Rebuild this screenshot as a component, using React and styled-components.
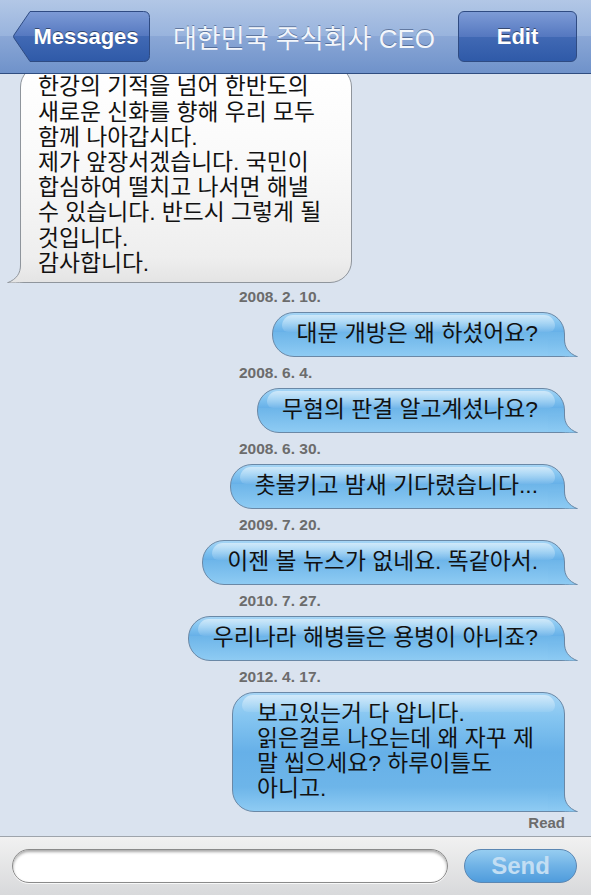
import React from 'react'
import styled, { createGlobalStyle } from 'styled-components'

const GlobalStyle = createGlobalStyle`
  html, body {
    margin: 0;
    padding: 0;
    background: #dae3ef;
  }
  * { box-sizing: border-box; }
`

const KO = `"Liberation Sans", "Noto Sans CJK KR", sans-serif`

const messages = [
    { date: '2008. 2. 10.', lines: ['대문 개방은 왜 하셨어요?'] },
    { date: '2008. 6. 4.', lines: ['무혐의 판결 알고계셨나요?'] },
    { date: '2008. 6. 30.', lines: ['촛불키고 밤새 기다렸습니다...'] },
    { date: '2009. 7. 20.', lines: ['이젠 볼 뉴스가 없네요. 똑같아서.'] },
    { date: '2010. 7. 27.', lines: ['우리나라 해병들은 용병이 아니죠?'] },
    {
        date: '2012. 4. 17.',
        lines: ['보고있는거 다 압니다.', '읽은걸로 나오는데 왜 자꾸 제', '말 씹으세요? 하루이틀도', '아니고.'],
        padRight: 30,
    },
]

const received = [
    '한강의 기적을 넘어 한반도의',
    '새로운 신화를 향해 우리 모두',
    '함께 나아갑시다.',
    '제가 앞장서겠습니다. 국민이',
    '합심하여 떨치고 나서면 해낼',
    '수 있습니다. 반드시 그렇게 될',
    '것입니다.',
    '감사합니다.',
]

const Tail = ({ tone }) => {
    const id = tone === 'blue' ? 'tail-blue' : 'tail-gray'
    const stops = tone === 'blue' ? ['#8ecbf3', '#6db5e9'] : ['#e4e4e4', '#eeeeee']
    const stroke = tone === 'blue' ? '#6a88a6' : '#8f959c'
    return (
        <TailSvg $tone={tone} width="30" height="28" viewBox="0 0 30 28">
            <defs>
                <linearGradient id={id} gradientUnits="userSpaceOnUse" x1="0" y1="28" x2="0" y2="4">
                    <stop offset="0" stopColor={stops[0]} />
                    <stop offset="1" stopColor={stops[1]} />
                </linearGradient>
            </defs>
            <path d="M0,10 L16.5,10 C16.5,18 20,24 29.5,27.8 C24,28.3 19,27.8 13,28 L0,28 Z" fill={`url(#${id})`} />
            <path d="M16.5,10 C16.5,18 20,24 29.5,27.8 C24,28.3 19,27.8 13,27.5 L0,27.5" fill="none" stroke={stroke} strokeWidth="1" />
        </TailSvg>
    )
}

const Lines = ({ lines }) => (
    <Text>
        {lines.map((l, i) => (
            <React.Fragment key={i}>
                {l}
                {i < lines.length - 1 && <br />}
            </React.Fragment>
        ))}
    </Text>
)

const App = () => {
    return (
        <>
            <GlobalStyle />
            <Screen>
                <NavBar>
                    <BackButton>
                        <svg width="138" height="51" viewBox="0 0 138 51">
                            <defs>
                                <linearGradient id="nav-btn" x1="0" y1="0" x2="0" y2="1">
                                    <stop offset="0" stopColor="#7d9bd6" />
                                    <stop offset="0.5" stopColor="#5578c0" />
                                    <stop offset="0.5" stopColor="#4169b4" />
                                    <stop offset="1" stopColor="#2f5aa8" />
                                </linearGradient>
                            </defs>
                            <path
                                d="M18,0.5 L131.5,0.5 Q137.5,0.5 137.5,6.5 L137.5,44.5 Q137.5,50.5 131.5,50.5 L18,50.5 L2,27 Q1,25.5 2,24 Z"
                                fill="url(#nav-btn)"
                                stroke="#2f4b82"
                                strokeWidth="1"
                            />
                        </svg>
                        <span>Messages</span>
                    </BackButton>
                    <Title>대한민국 주식회사 CEO</Title>
                    <EditButton>Edit</EditButton>
                </NavBar>

                <Chat>
                    <Bubble $tone="gray">
                        <Lines lines={received} />
                        <Tail tone="gray" />
                    </Bubble>

                    {messages.map((m) => (
                        <React.Fragment key={m.date}>
                            <DateStamp>{m.date}</DateStamp>
                            <Bubble $tone="blue" $padRight={m.padRight}>
                                <Lines lines={m.lines} />
                                <Tail tone="blue" />
                            </Bubble>
                        </React.Fragment>
                    ))}

                    <ReadMark>Read</ReadMark>
                </Chat>

                <InputBar>
                    <Field />
                    <SendButton>Send</SendButton>
                </InputBar>
            </Screen>
        </>
    )
}

const Screen = styled.div`
  width: 591px;
  height: 895px;
  display: flex;
  flex-direction: column;
  overflow: hidden;
  background: #dae3ef;
`

const NavBar = styled.header`
  position: relative;
  z-index: 2;
  height: 74px;
  flex-shrink: 0;
  display: flex;
  align-items: flex-start;
  padding: 11px 14px 0 12px;
  background: linear-gradient(#b2c7e6 0%, #98b3dd 50%, #8aa7d6 50%, #6f92ca 100%);
  border-bottom: 1px solid #2f4d80;
`

const BackButton = styled.button`
  position: relative;
  width: 138px;
  height: 51px;
  padding: 0 0 0 10px;
  border: none;
  background: none;
  display: flex;
  align-items: center;
  justify-content: center;
  font-family: "Liberation Sans", Arial, sans-serif;
  font-weight: bold;
  font-size: 22px;
  color: #fff;
  text-shadow: 0 -1px 0 rgba(0, 0, 0, 0.45);

  svg {
    position: absolute;
    inset: 0;
  }
  span {
    position: relative;
  }
`

const Title = styled.h1`
  flex: 1;
  margin: 0;
  height: 51px;
  display: flex;
  align-items: center;
  justify-content: center;
  font-family: ${KO};
  font-weight: normal;
  font-size: 26px;
  color: #f3f6fb;
  text-shadow: 0 -1px 0 rgba(40, 60, 100, 0.5);
`

const EditButton = styled.button`
  width: 119px;
  height: 51px;
  border: 1px solid #2f4b82;
  border-radius: 6px;
  background: linear-gradient(#7d9bd6 0%, #5578c0 50%, #4169b4 50%, #2f5aa8 100%);
  font-family: "Liberation Sans", Arial, sans-serif;
  font-weight: bold;
  font-size: 22px;
  color: #fff;
  text-shadow: 0 -1px 0 rgba(0, 0, 0, 0.45);
`

const Chat = styled.main`
  flex: 1;
  min-height: 0;
  overflow: hidden;
  display: flex;
  flex-direction: column;
  justify-content: flex-end;
  padding: 0 26px 5px 20px;
`

const Bubble = styled.div`
  position: relative;
  flex-shrink: 0;
  align-self: ${(p) => (p.$tone === 'blue' ? 'flex-end' : 'flex-start')};
  padding: ${(p) =>
        p.$tone === 'blue' ? `8px ${p.$padRight || 26}px 10px 24px` : '8px 30px 6px 17px'};
  margin-bottom: ${(p) => (p.$tone === 'blue' ? '0' : '-2px')};
  border: 1px solid ${(p) => (p.$tone === 'blue' ? '#6a88a6' : '#8f959c')};
  border-radius: 22px;
  ${(p) => (p.$tone === 'blue' ? 'border-bottom-right-radius: 16px;' : 'border-bottom-left-radius: 16px;')}
  background: ${(p) =>
        p.$tone === 'blue'
            ? 'linear-gradient(to top, #8ecbf3 0px, #6db5e9 24px, #66b0e8 50%, #86c6f1 80%, #a6d5f5 100%)'
            : 'linear-gradient(to top, #e4e4e4 0px, #eeeeee 24px, #fafafa 60%, #ffffff 100%)'};
  font-family: ${KO};
  font-size: 22.8px;
  line-height: ${(p) => (p.$tone === 'blue' ? '25px' : '25.2px')};
  color: #111;
  white-space: nowrap;

  ${(p) =>
        p.$tone === 'blue' &&
        `
    &::before {
      content: '';
      position: absolute;
      top: 2px;
      left: 9px;
      right: 9px;
      height: 17px;
      border-radius: 14px 14px 8px 8px;
      background: linear-gradient(rgba(255, 255, 255, 0.5), rgba(255, 255, 255, 0.08));
    }
  `}
`

const Text = styled.span`
  position: relative;
  z-index: 1;
`

const TailSvg = styled.svg`
  position: absolute;
  bottom: -1px;
  ${(p) => (p.$tone === 'blue' ? 'right: -14px;' : 'left: -14px; transform: scaleX(-1);')}
`

const DateStamp = styled.div`
  flex-shrink: 0;
  margin: 7px 0 7px 219px;
  font-family: "Liberation Sans", Arial, sans-serif;
  font-weight: bold;
  font-size: 15.5px;
  line-height: 17px;
  color: #6c6c6c;
`

const ReadMark = styled.div`
  flex-shrink: 0;
  margin-top: 2px;
  text-align: right;
  font-family: "Liberation Sans", Arial, sans-serif;
  font-weight: bold;
  font-size: 15px;
  line-height: 17px;
  color: #6c6c6c;
`

const InputBar = styled.footer`
  height: 59px;
  flex-shrink: 0;
  display: flex;
  align-items: center;
  gap: 16px;
  padding: 0 14px 1px 12px;
  border-top: 1px solid #9ea4ab;
  background: linear-gradient(#f1f1f1, #d8d9db);
`

const Field = styled.div`
  flex: 1;
  height: 34px;
  border-radius: 17px;
  border: 1px solid #8a8a8a;
  background: #fff;
  box-shadow: inset 0 2px 3px rgba(0, 0, 0, 0.35), 0 1px 0 rgba(255, 255, 255, 0.8);
`

const SendButton = styled.button`
  width: 113px;
  height: 34px;
  border-radius: 17px;
  border: 1px solid #5b87b3;
  background: linear-gradient(#96cdf1 0%, #6fb2e6 50%, #4f9cdc 100%);
  font-family: "Liberation Sans", Arial, sans-serif;
  font-weight: bold;
  font-size: 24px;
  line-height: 1;
  color: #c3def3;
  padding: 0;
`

export default App
